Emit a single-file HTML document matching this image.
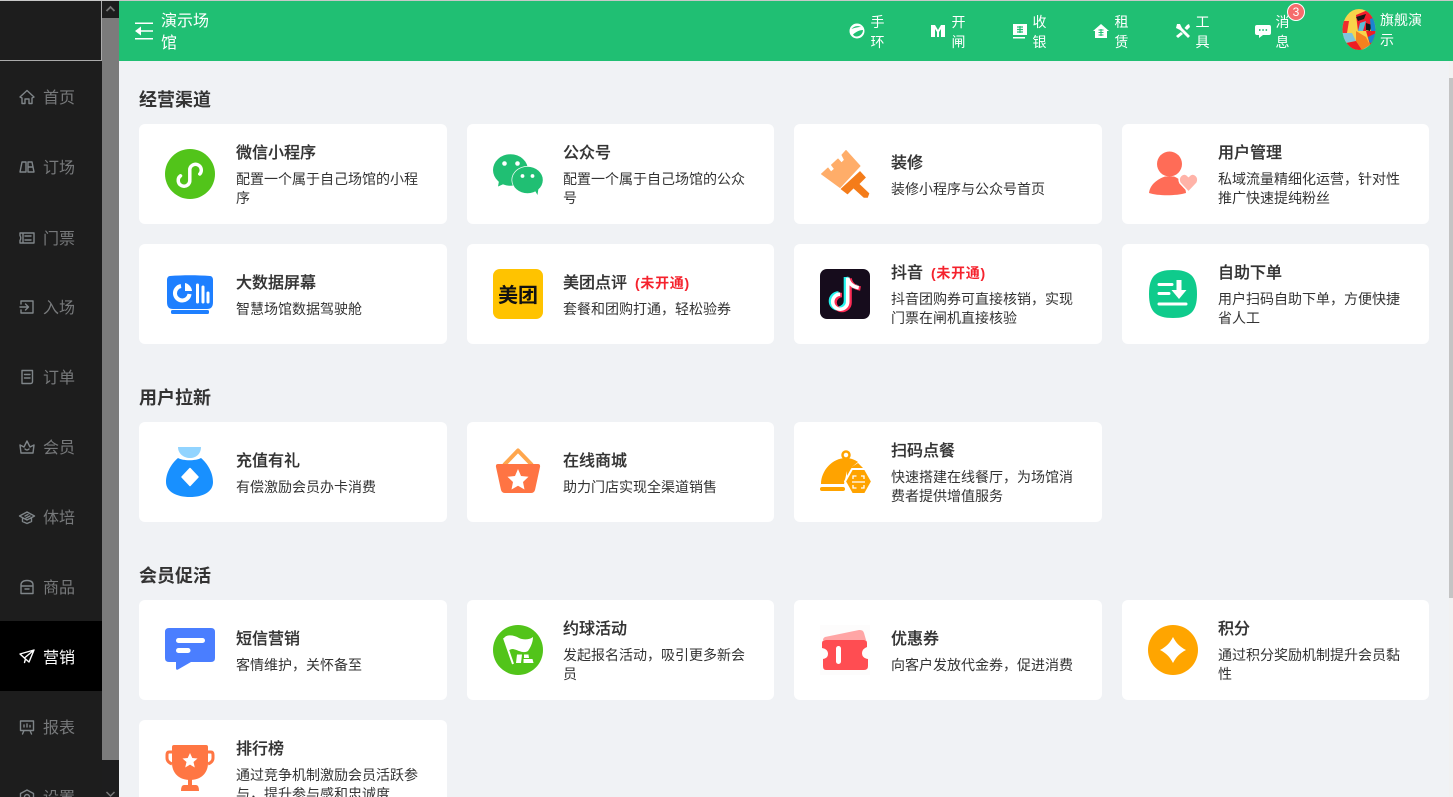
<!DOCTYPE html>
<html lang="zh-CN"><head><meta charset="utf-8"><title>经营渠道</title>
<style>
*{box-sizing:border-box}
html,body{margin:0;padding:0;width:1453px;height:797px;overflow:hidden;background:#f0f2f5}
body{position:relative;font-family:"Liberation Sans","Noto Sans CJK SC",sans-serif;color:#333}
.a{position:absolute}
svg{display:block;overflow:visible}
#side{left:0;top:0;width:102px;height:797px;background:#1d1d1d;overflow:hidden}
#logo{left:0;top:1px;width:102px;height:60px;border-right:1px solid #aaa;border-bottom:1px solid #aaa}
.m{position:absolute;left:0;width:102px;height:70px;color:#77797b;font-size:16px;line-height:74px;padding-left:43px}
.m svg{position:absolute;left:19px;top:27px;width:16px;height:16px;fill:none;stroke:#7f8589;stroke-width:1.4;stroke-linejoin:round;stroke-linecap:round}
.m.on{background:#000;color:#fff;line-height:76px}
.m.on svg{stroke:#fff}
#bar{left:102px;top:0;width:17px;height:797px;background:#7b7b7b}
#top{left:0;top:0;width:1453px;height:1px;background:#c8c8c8;z-index:5}
#head{left:119px;top:1px;width:1334px;height:60px;background:#20bf73;color:#fff}
.h{position:absolute;top:12px;width:15px;font-size:14px;line-height:19.5px;color:#fff;text-align:center}
.hi{position:absolute;top:22px;width:16px;height:16px;fill:#fff}
h2{position:absolute;left:139px;margin:0;font-size:18px;line-height:24px;font-weight:700;color:#333;white-space:nowrap}
.c{position:absolute;width:308px;height:100px;background:#fff;border-radius:6px;display:flex;align-items:center;white-space:nowrap}
.c svg{position:absolute;left:26px;top:25px;width:50px;height:50px}
.t{margin-left:97px}
.n .t{margin-left:96px}
.s .t{position:relative;top:1px}
.t b{display:block;position:relative;top:1px;font-size:16px;line-height:23px;font-weight:500;color:#333;margin-bottom:6px;-webkit-text-stroke:.2px #333}
.t i{font-style:normal;font-size:14px;font-weight:700;color:#f5222d;margin-left:8px;letter-spacing:.7px;-webkit-text-stroke:0}
.t span{display:block;font-size:14px;line-height:19px;color:#333}
</style></head><body>
<div class="a" id="top"></div>
<div class="a" id="side">
<div class="a" id="logo"></div>
<div class="m" style="top:62px">首页<svg viewBox="0 0 16 16"><path d="M1 8 8 1.500 15 8 13 9V14.500H10V10H6V14.500H3V9Z"/></svg></div>
<div class="m" style="top:132px">订场<svg viewBox="0 0 16 16"><path d="M1 13 3 3H7V13ZM9 3H13L15 13H9ZM9 8H14"/></svg></div>
<div class="m" style="top:203px">门票<svg viewBox="0 0 16 16"><path d="M1 3H15V13H1V10.500Q2.500 8 1 5.500ZM6 6H12M6 10H12M4 3V13"/></svg></div>
<div class="m" style="top:272px">入场<svg viewBox="0 0 16 16"><path d="M2 5V2H14V14H2V11M1 8H9M6.500 5 9.500 8 6.500 11"/></svg></div>
<div class="m" style="top:342px">订单<svg viewBox="0 0 16 16"><path d="M3 1.500H13.500V12.500Q13.500 14.500 11.500 14.500H3ZM5.500 5.500H11M5.500 9H11"/></svg></div>
<div class="m" style="top:412px">会员<svg viewBox="0 0 16 16"><path d="M2 14 1 6 5 8 8 2 11 8 15 6 14 14ZM6 10Q8 12 10 10"/></svg></div>
<div class="m" style="top:482px">体培<svg viewBox="0 0 16 16"><path d="M0.500 7 8 3 15.500 7 8 11ZM3.500 9V12.500L8 14.500 12.500 12.500V9M6 7 9 5.500M7 9 11 7"/></svg></div>
<div class="m" style="top:552px">商品<svg viewBox="0 0 16 16"><path d="M2 6Q2 1.500 8 1.500T14 6V14.500H2ZM2 7H14M6 10H10"/></svg></div>
<div class="m on" style="top:622px;height:70px;margin-top:-1px">营销<svg viewBox="0 0 16 16"><path d="M1 6 15 2 10 14 6.500 11ZM6.500 11 5.500 14.500M6 9.500 15 2"/></svg></div>
<div class="m" style="top:692px">报表<svg viewBox="0 0 16 16"><path d="M1.500 2H14.500V11.500H1.500ZM5 11.500 3.500 15M11 11.500 12.500 15M5 8V6M8 8V5M11 8V6.500"/></svg></div>
<div class="m" style="top:762px">设置<svg viewBox="0 0 16 16"><path d="M8 1 14.500 4.500V11.500L8 15 1.500 11.500V4.500ZM5.500 8A2.500 2.500 0 1 0 10.500 8 2.500 2.500 0 1 0 5.500 8"/></svg></div>
</div>
<div class="a" id="bar">
<div class="a" style="left:0;top:0;width:17px;height:18px;background:#1d1d1d"></div>
<svg class="a" style="left:4px;top:6px;width:9px;height:6px" viewBox="0 0 9 6"><path d="M0.500 5 4.500 1 8.500 5" fill="none" stroke="#777" stroke-width="1.800"/></svg>
<div class="a" style="left:0;top:760px;width:17px;height:37px;background:#1d1d1e"></div>
<svg class="a" style="left:4px;top:791px;width:9px;height:6px" viewBox="0 0 9 6"><path d="M0.500 1 4.500 5 8.500 1" fill="none" stroke="#777" stroke-width="1.500"/></svg>
</div>
<div class="a" id="head">
<svg class="a" style="left:16px;top:21px;width:18px;height:18px" viewBox="0 0 18 18"><path d="M0 .5H18V2H0ZM0 16H18V17.500H0ZM5.500 8.200H18V9.800H5.500ZM6 4.500V13.500L0 9Z" fill="#fff"/></svg>
<div class="a" style="left:42px;top:10px;width:50px;font-size:16px;line-height:22px">演示场<br>馆</div>
<svg class="hi" style="left:730px" viewBox="0 0 16 16"><path d="M8 .5A7.500 7.500 0 1 0 8 15.500 7.500 7.500 0 1 0 8 .5ZM2.500 6C5 3 9 2.500 12 4 9 4 5 5 2.500 6ZM4 11.500C6 9.500 10 7 14 7 14 10.500 11 13.500 7.500 13.500 6 13.500 4.800 12.800 4 11.500Z" fill-rule="evenodd"/></svg>
<svg class="hi" style="left:811px" viewBox="0 0 16 16"><path d="M1 2H5L8 7 11 2H15V14H11V6L9 9V14H7V9L5 6V14H1Z"/></svg>
<svg class="hi" style="left:893px" viewBox="0 0 16 16"><path d="M1 1H15V12H1ZM1 14H13V15.500H1Z"/><path d="M5 4H11M5 6.500H11M5 9H11M8 3V10" stroke="#20bf73" stroke-width="1.200" fill="none"/></svg>
<svg class="hi" style="left:974px" viewBox="0 0 16 16"><path d="M8 1 16 8H14V15H2V8H0Z"/><path d="M5.500 7H10.500M5.500 9.500H10.500M5.500 12H10.500M8 6V13" stroke="#20bf73" stroke-width="1.100" fill="none"/></svg>
<svg class="hi" style="left:1056px" viewBox="0 0 16 16"><path d="M2 1 5 1 7 5 15 13 13 15 5 7 1 5ZM14 1 15 4 12 7 9.500 5 12 2ZM6 9 8 11 3 15 1 13Z"/></svg>
<svg class="hi" style="left:1136px" viewBox="0 0 16 16"><path d="M2 2H14Q16 2 16 4V10Q16 12 14 12H8L4 15V12H2Q0 12 0 10V4Q0 2 2 2Z"/><path d="M4 7H5.500M7.300 7H8.800M10.600 7H12.100" stroke="#20bf73" stroke-width="1.800"/></svg>
<div class="h" style="left:751px">手<br>环</div>
<div class="h" style="left:832px">开<br>闸</div>
<div class="h" style="left:913px">收<br>银</div>
<div class="h" style="left:995px">租<br>赁</div>
<div class="h" style="left:1076px">工<br>具</div>
<div class="h" style="left:1156px">消<br>息</div>
<div class="a" style="left:1168px;top:2px;width:18px;height:18px;border-radius:50%;background:#f56c6c;border:1px solid #fff;font-size:12px;line-height:16px;text-align:center;color:#fff">3</div>
<svg class="a" style="left:1223px;top:8px;width:34px;height:41px" viewBox="0 0 34 41"><defs><clipPath id="av"><ellipse cx="17" cy="20.500" rx="16.500" ry="20.500"/></clipPath></defs><g clip-path="url(#av)"><rect width="34" height="41" fill="#f8d44a"/><path d="M0 12H7L5 24H0Z" fill="#ee2d2d"/><path d="M14 6 28 0 34 10 24 22 16 22Z" fill="#f01c2c"/><path d="M14 8 24 5 22 10 16 12Z" fill="#181818"/><path d="M24 14 30 16 28 22 24 21Z" fill="#181818"/><path d="M18 14 24 12 21 22 16 22Z" fill="#5dbcd8"/><path d="M28 10 34 8 34 22 29 22Z" fill="#1b84d0"/><path d="M0 24 10 24 14 32 4 34 0 32Z" fill="#7fc4dc"/><path d="M14 22 24 28 28 36 20 41 14 32Z" fill="#f5811f"/><path d="M24 22 34 22 34 32 28 36Z" fill="#ef1c24"/><path d="M26 28 34 24 34 32 28 34Z" fill="#1b84d0"/><path d="M4 34 14 32 20 41 6 41Z" fill="#ef1c24"/><path d="M20 41 28 36 34 41Z" fill="#5dbcd8"/></g></svg>
<div class="a" style="left:1261px;top:9px;width:46px;font-size:14px;line-height:20px">旗舰演<br>示</div>
</div>
<div class="a" style="left:1449px;top:61px;width:4px;height:736px;background:#f1f1f1"><div class="a" style="left:0;top:17px;width:4px;height:520px;background:#c4c4c4"></div></div>

<h2 style="top:87.500px">经营渠道</h2>
<h2 style="top:385.500px">用户拉新</h2>
<h2 style="top:563.500px">会员促活</h2>

<div class="c" style="left:139px;top:124px"><svg viewBox="0 0 50 50"><circle cx="25" cy="25" r="25" fill="#52c41a"/><path d="M15.500 26.800A5.800 5.800 0 1 0 24.800 31V20A5.800 5.800 0 1 1 34.800 25" fill="none" stroke="#fff" stroke-width="3.500" stroke-linecap="round"/></svg><div class="t"><b>微信小程序</b><span>配置一个属于自己场馆的小程<br>序</span></div></div>
<div class="c n" style="left:467px;top:124px;width:307px"><svg viewBox="0 0 50 50"><ellipse cx="17.500" cy="21" rx="17.500" ry="15.800" fill="#20bf73"/><path d="M6 32 5 37.500 13 34Z" fill="#20bf73"/><circle cx="11.500" cy="14.500" r="2.300" fill="#fff"/><circle cx="24.500" cy="14.500" r="2.300" fill="#fff"/><ellipse cx="34.500" cy="31" rx="16" ry="14" fill="#fff"/><ellipse cx="34.500" cy="31" rx="15.300" ry="13.300" fill="#20bf73"/><path d="M41 40 44.500 46 45.500 39Z" fill="#20bf73"/><circle cx="29.500" cy="27" r="1.900" fill="#fff"/><circle cx="39.500" cy="27" r="1.900" fill="#fff"/></svg><div class="t"><b>公众号</b><span>配置一个属于自己场馆的公众<br>号</span></div></div>
<div class="c s" style="left:794px;top:124px"><svg viewBox="0 0 50 50"><path d="M1.500 25 8 19 11 23 14.500 20 11.500 16 18 10 21.500 14 24.500 11 22 6 26 1.500 40 17 20 38.500Z" fill="#ffad69" stroke="#ffad69" stroke-linejoin="round"/><path d="M21 40 40 22.500 45.500 28.500 39 35 49 44.500 47.500 48.500 44 48.500 33.500 39 27.500 45Z" fill="#f47c1a" stroke="#f47c1a" stroke-width=".6" stroke-linejoin="round"/></svg><div class="t"><b>装修</b><span>装修小程序与公众号首页</span></div></div>
<div class="c n" style="left:1122px;top:124px;width:307px"><svg viewBox="0 0 50 50"><circle cx="21.500" cy="15" r="12.500" fill="#ff6c57"/><path d="M1 44C2 35 10 30 17 27.500H26C32 30 37 34 38 44 28 47 10 47 1 44Z" fill="#ff6c57"/><path d="M40.500 43 32 34C29 28 35 23 39 26L40.500 27.500 42 26C46 23 52 28 49 34Z" fill="#ffb3a8" stroke="#fff" stroke-width="1.500" stroke-linejoin="round"/></svg><div class="t"><b>用户管理</b><span>私域流量精细化运营，针对性<br>推广快速提纯粉丝</span></div></div>

<div class="c s" style="left:139px;top:244px"><svg viewBox="0 0 50 50"><path d="M5 7C18 6 32 6 45 7 47 7 48 9 48 11V33C48 38 46 40 42 40H8C4 40 2 38 2 33V11C2 9 3 7 5 7Z" fill="#1e7fff"/><rect x="6" y="41" width="38" height="4" rx="1.500" fill="#1e7fff"/><path d="M16 17A7.300 7.300 0 1 0 24.500 25" fill="none" stroke="#fff" stroke-width="4"/><path d="M20 14A9 9 0 0 1 27 22H20Z" fill="#fff"/><path d="M32.500 16V33M38 18V33M43 24V33" stroke="#fff" stroke-width="3" stroke-linecap="round"/></svg><div class="t"><b>大数据屏幕</b><span>智慧场馆数据驾驶舱</span></div></div>
<div class="c s n" style="left:467px;top:244px;width:307px"><svg viewBox="0 0 50 50"><rect width="50" height="50" rx="7" fill="#ffc300"/><text x="25" y="33" text-anchor="middle" font-size="20" font-weight="700" fill="#111" font-family="Liberation Sans,Noto Sans CJK SC,sans-serif">美团</text></svg><div class="t"><b>美团点评<i>(未开通)</i></b><span>套餐和团购打通，轻松验券</span></div></div>
<div class="c" style="left:794px;top:244px"><svg viewBox="0 0 50 50"><rect width="50" height="50" rx="7" fill="#160c1c"/><g fill="none" stroke-width="4.600"><path d="M26 8V32A7.500 7.500 0 1 1 18.500 24.500M26 8C27 14 31 17 37 18" stroke="#25f4ee"/><path d="M29.500 9.500V33.500A7.500 7.500 0 1 1 22 26M29.500 9.500C30.500 15.500 34.500 18.500 40.500 19.500" stroke="#fe2c55"/><path d="M27.700 8.700V32.700A7.500 7.500 0 1 1 20.200 25.200M27.700 8.700C28.700 14.700 32.700 17.700 38.700 18.700" stroke="#fff" stroke-width="3.600"/></g></svg><div class="t"><b>抖音<i>(未开通)</i></b><span>抖音团购券可直接核销，实现<br>门票在闸机直接核验</span></div></div>
<div class="c n" style="left:1122px;top:244px;width:307px"><svg viewBox="0 0 50 50"><path d="M25 1C42 1 49 7 49 25S42 49 25 49 1 43 1 25 8 1 25 1Z" fill="#0fcb8c"/><path d="M11 15.500H24M11 24.500H21M11 35H38" stroke="#fff" stroke-width="3" stroke-linecap="round"/><path d="M28.500 11H33.500V21H38.500L31 30 23.500 21H28.500Z" fill="#fff"/></svg><div class="t"><b>自助下单</b><span>用户扫码自助下单，方便快捷<br>省人工</span></div></div>

<div class="c s" style="left:139px;top:422px"><svg viewBox="0 0 50 50"><path d="M13 11C6 17 1 26 1 35 1 45 12 50 25 50S48 45 48 35C48 26 43 17 36 11 31 14 18 14 13 11Z" fill="#1890ff"/><path d="M13 0H36C36 7 31 11 25 11S13 7 13 0Z" fill="#92d4ff"/><path d="M25 21.500 33 30 25 38.500 17 30Z" fill="#fff" stroke="#fff" stroke-width="1.500" stroke-linejoin="round"/></svg><div class="t"><b>充值有礼</b><span>有偿激励会员办卡消费</span></div></div>
<div class="c s n" style="left:467px;top:422px;width:307px"><svg viewBox="0 0 50 50"><path d="M11 18 25 3.500 39 18" fill="none" stroke="#ffa64d" stroke-width="4" stroke-linejoin="round"/><path d="M5 17H45Q47.500 17 47 20L42 43Q41 46 38 46H12Q9 46 8 43L3 20Q2.500 17 5 17Z" fill="#ff7443"/><path d="M25 22 28 29 35.500 29.800 30 35 31.500 42.500 25 38.800 18.500 42.500 20 35 14.500 29.800 22 29Z" fill="#fff"/></svg><div class="t"><b>在线商城</b><span>助力门店实现全渠道销售</span></div></div>
<div class="c" style="left:794px;top:422px"><svg viewBox="0 0 50 50"><circle cx="26" cy="8" r="3.500" fill="none" stroke="#ffa300" stroke-width="2.500"/><path d="M1 37C1 24 12 11 26 11 31 11 35 13 38 15L27 24 24 37Z" fill="#ffa300"/><path d="M27 23 38 16 45 23 27 37Z" fill="#ffa300"/><rect x="0" y="40" width="25" height="4" rx="2" fill="#ffa300"/><path d="M32 22H45L52 34.500 45 47H32L25 34.500Z" fill="#ffa300" stroke="#fff" stroke-width="2" stroke-linejoin="round"/><path d="M33 32V29H36.500M41 29H44V32M33 38V41H36.500M41 41H44V38M32 35H45" fill="none" stroke="#fff" stroke-width="1.300"/></svg><div class="t"><b>扫码点餐</b><span>快速搭建在线餐厅，为场馆消<br>费者提供增值服务</span></div></div>

<div class="c s" style="left:139px;top:600px"><svg viewBox="0 0 50 50"><path d="M4 3H46Q50 3 50 7V33Q50 37 46 37H26L13 44.500Q11 45.500 11 43V37H4Q0 37 0 33V7Q0 3 4 3Z" fill="#4a7eff"/><rect x="11" y="13" width="29" height="5" rx="2.500" fill="#fff"/><rect x="11" y="23" width="14.500" height="5" rx="2.500" fill="#fff"/></svg><div class="t"><b>短信营销</b><span>客情维护，关怀备至</span></div></div>
<div class="c n" style="left:467px;top:600px;width:307px"><svg viewBox="0 0 50 50"><circle cx="25" cy="25" r="25" fill="#52c41a"/><path d="M11 13C14 9 21 10 26 13 30 15 36 15 40 12 40 18 37 23 35 26 30 29 25 25 20 24 18 24 16 25 15 26Z" fill="#fff"/><path d="M11 13 20 39" stroke="#fff" stroke-width="2"/><path d="M24 29.500H29L28 38H23ZM31 29.500H35.500L36 33H31ZM30.500 34H39.500L40.500 38H30.500Z" fill="#fff"/></svg><div class="t"><b>约球活动</b><span>发起报名活动，吸引更多新会<br>员</span></div></div>
<div class="c s" style="left:794px;top:600px"><svg viewBox="0 0 50 50"><rect width="50" height="50" fill="#fdfcfc"/><path d="M5 12 39 5Q43 4.500 44 8L46 15H3Q3 13 5 12Z" fill="#ffa5a5"/><path d="M6 15H44Q47 15 47 18V22Q42 24 42 28 42 33 48 34V41Q48 45 44 45H6Q3 45 3 41V34Q8 33 8 29 8 24 2 23V18Q2 15 6 15Z" fill="#ff4d52"/><rect x="16" y="21" width="5" height="18" rx="2.500" fill="#fff"/></svg><div class="t"><b>优惠券</b><span>向客户发放代金券，促进消费</span></div></div>
<div class="c n" style="left:1122px;top:600px;width:307px"><svg viewBox="0 0 50 50"><circle cx="25" cy="25" r="25" fill="#ffa500"/><path d="M25 12C28 18 32 22 38 25 32 28 28 32 25 38 22 32 18 28 12 25 18 22 22 18 25 12Z" fill="#fff"/></svg><div class="t"><b>积分</b><span>通过积分奖励机制提升会员黏<br>性</span></div></div>

<div class="c" style="left:139px;top:720px"><svg viewBox="0 0 50 50"><path d="M9 0H41Q43 0 43 2V18C43 28 36 35 25 35S7 28 7 18V2Q7 0 9 0Z" fill="#ff7643"/><path d="M7 7H4Q2 7 2 10V13Q2 17 7 19M43 7H46Q48 7 48 10V13Q48 17 43 19" fill="none" stroke="#ff7643" stroke-width="3"/><rect x="23" y="34" width="4" height="8" fill="#ff7643"/><path d="M19 40H31Q34 40 34 46H16Q16 40 19 40Z" fill="#ff7643"/><path d="M25 8 27.300 13 32.500 13.500 28.500 17 29.800 22.500 25 19.600 20.200 22.500 21.500 17 17.500 13.500 22.700 13Z" fill="#fff"/></svg><div class="t"><b>排行榜</b><span>通过竞争机制激励会员活跃参<br>与，提升参与感和忠诚度</span></div></div>
</body></html>
